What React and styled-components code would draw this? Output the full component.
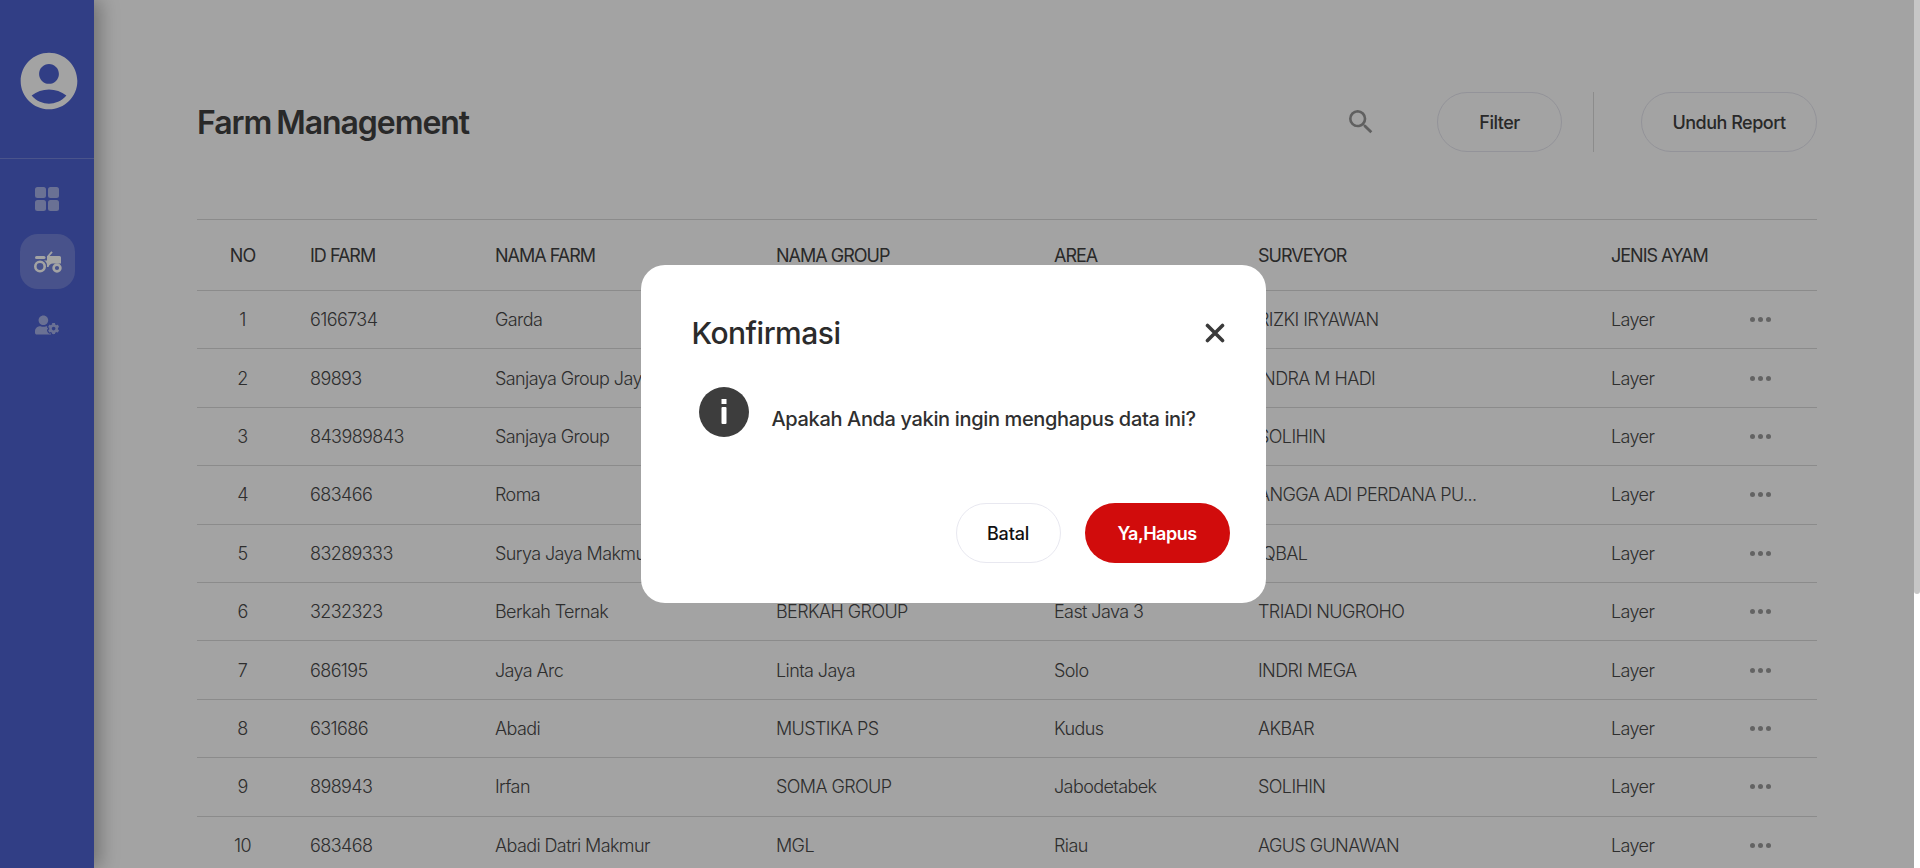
import { createGlobalStyle } from "styled-components";
import styled from "styled-components";
import { MdAccountCircle, MdSearch } from "react-icons/md";
import { FaUserCog } from "react-icons/fa";

const GlobalStyle = createGlobalStyle`
  html, body { margin: 0; padding: 0; height: 100%; overflow: hidden; background: #fff; }
  body { font-family: Inter, "Liberation Sans", sans-serif; color: #3f3f3f; }
  * { box-sizing: border-box; }
`;

const rows = [
  ["1", "6166734", "Garda", "", "", "RIZKI IRYAWAN"],
  ["2", "89893", "Sanjaya Group Jaya", "", "", "INDRA M HADI"],
  ["3", "843989843", "Sanjaya Group", "", "", "SOLIHIN"],
  ["4", "683466", "Roma", "", "", "ANGGA ADI PERDANA PU..."],
  ["5", "83289333", "Surya Jaya Makmur", "", "", "IQBAL"],
  ["6", "3232323", "Berkah Ternak", "BERKAH GROUP", "East Java 3", "TRIADI NUGROHO"],
  ["7", "686195", "Jaya Arc", "Linta Jaya", "Solo", "INDRI MEGA"],
  ["8", "631686", "Abadi", "MUSTIKA PS", "Kudus", "AKBAR"],
  ["9", "898943", "Irfan", "SOMA GROUP", "Jabodetabek", "SOLIHIN"],
  ["10", "683468", "Abadi Datri Makmur", "MGL", "Riau", "AGUS GUNAWAN"],
];

const columns = "91px 185px 281px 278px 204px 353px 130px 1fr";

export default function App() {
  return (
    <Page>
      <GlobalStyle />
      <Sidebar>
        <AvatarBox>
          <MdAccountCircle size={68} />
        </AvatarBox>
        <SideNav>
          <NavItem>
            <svg width="24" height="24" viewBox="0 0 24 24" fill="currentColor">
              <rect x="0" y="0" width="11" height="11" rx="2.5" />
              <rect x="13" y="0" width="11" height="11" rx="2.5" />
              <rect x="0" y="13" width="11" height="11" rx="2.5" />
              <rect x="13" y="13" width="11" height="11" rx="2.5" />
            </svg>
          </NavItem>
          <NavItem $active>
            <svg width="29" height="22" viewBox="0 0 29 22" fill="none">
              <circle cx="7" cy="15.5" r="4.7" stroke="currentColor" strokeWidth="2.6" />
              <circle cx="24" cy="17" r="3.4" stroke="currentColor" strokeWidth="2.6" />
              <rect x="2" y="5" width="10.5" height="3" rx="1.5" fill="currentColor" />
              <path d="M15 5.5 L19 0.8" stroke="currentColor" strokeWidth="1.8" />
              <path
                d="M14 5 H26.5 Q28 5 28 6.5 V12.5 H20 Q16.5 12.5 15.5 16 H14 Q14.5 11 11 9.5 H14 Z"
                fill="currentColor"
              />
            </svg>
          </NavItem>
          <NavItem>
            <FaUserCog size={24} />
          </NavItem>
        </SideNav>
      </Sidebar>
      <Main>
        <Header>
          <Title>Farm Management</Title>
          <Actions>
            <SearchIcon>
              <MdSearch size={32} />
            </SearchIcon>
            <PillButton $w={125}>Filter</PillButton>
            <Divider />
            <PillButton $w={176}>Unduh Report</PillButton>
          </Actions>
        </Header>
        <Table>
          <HeadRow>
            <NoCell>NO</NoCell>
            <Cell>ID FARM</Cell>
            <Cell>NAMA FARM</Cell>
            <Cell>NAMA GROUP</Cell>
            <Cell>AREA</Cell>
            <Cell>SURVEYOR</Cell>
            <Cell>JENIS AYAM</Cell>
            <Cell />
          </HeadRow>
          {rows.map((r) => (
            <BodyRow key={r[0]}>
              <NoCell>{r[0]}</NoCell>
              <Cell>{r[1]}</Cell>
              <Cell>{r[2]}</Cell>
              <Cell>{r[3]}</Cell>
              <Cell>{r[4]}</Cell>
              <Cell>{r[5]}</Cell>
              <Cell>Layer</Cell>
              <DotsCell>
                <Dot />
                <Dot />
                <Dot />
              </DotsCell>
            </BodyRow>
          ))}
        </Table>
      </Main>
      <ScrollTrack>
        <ScrollThumb />
      </ScrollTrack>
      <Overlay>
        <Modal>
          <ModalHead>
            <ModalTitle>Konfirmasi</ModalTitle>
            <CloseButton>
              <svg width="20" height="20" viewBox="0 0 20 20">
                <path
                  d="M2.5 2.5 L17.5 17.5 M17.5 2.5 L2.5 17.5"
                  stroke="currentColor"
                  strokeWidth="3.6"
                  strokeLinecap="round"
                />
              </svg>
            </CloseButton>
          </ModalHead>
          <ModalBody>
            <svg width="50" height="50" viewBox="0 0 50 50">
              <circle cx="25" cy="25" r="25" fill="#3d3d3d" />
              <rect x="22.5" y="12" width="5" height="5" fill="#fff" />
              <rect x="22.5" y="20" width="5" height="17" rx="1" fill="#fff" />
            </svg>
            <Message>Apakah Anda yakin ingin menghapus data ini?</Message>
          </ModalBody>
          <ModalFoot>
            <CancelButton>Batal</CancelButton>
            <DangerButton>Ya,Hapus</DangerButton>
          </ModalFoot>
        </Modal>
      </Overlay>
    </Page>
  );
}

const Page = styled.div`
  position: relative;
  display: flex;
  width: 1920px;
  height: 868px;
  overflow: hidden;
`;

const Sidebar = styled.aside`
  flex: 0 0 94px;
  background: #4e62d0;
  box-shadow: 6px 0 18px rgba(0, 0, 0, 0.3);
  z-index: 1;
`;

const AvatarBox = styled.div`
  height: 159px;
  padding: 47px 0 0 3px;
  display: flex;
  justify-content: center;
  align-items: flex-start;
  color: #fff;
  border-bottom: 1px solid rgba(255, 255, 255, 0.22);
`;

const SideNav = styled.nav`
  display: flex;
  flex-direction: column;
  align-items: center;
  padding-top: 12px;
`;

const NavItem = styled.div`
  width: 55px;
  height: 55px;
  margin-bottom: 8px;
  border-radius: 18px;
  display: flex;
  align-items: center;
  justify-content: center;
  background: ${(p) => (p.$active ? "rgba(255,255,255,0.2)" : "transparent")};
  color: ${(p) => (p.$active ? "#fff" : "rgba(255,255,255,0.5)")};
`;

const Main = styled.main`
  flex: 1;
  padding: 92px 97px 0 103px;
`;

const Header = styled.header`
  display: flex;
  justify-content: space-between;
  align-items: center;
  height: 60px;
  margin-bottom: 67px;
`;

const Title = styled.h1`
  margin: 0;
  font-size: 32px;
  font-weight: 600;
  letter-spacing: -1.05px;
  word-spacing: -2px;
  color: #404040;
`;

const Actions = styled.div`
  display: flex;
  align-items: center;
`;

const SearchIcon = styled.div`
  display: flex;
  color: #969696;
  margin-right: 60px;
`;

const PillButton = styled.div`
  width: ${(p) => p.$w}px;
  height: 60px;
  border: 1px solid #e6e6ef;
  border-radius: 30px;
  display: flex;
  align-items: center;
  justify-content: center;
  font-size: 18px;
  font-weight: 500;
  letter-spacing: -0.5px;
  color: #404040;
`;

const Divider = styled.div`
  width: 1px;
  height: 60px;
  margin: 0 47px 0 31px;
  background: #dcdcdc;
`;

const Table = styled.div`
  border-top: 1px solid #d9d9d9;
`;

const HeadRow = styled.div`
  display: grid;
  grid-template-columns: ${columns};
  height: 71px;
  align-items: center;
  border-bottom: 1px solid #d9d9d9;
  font-size: 18px;
  font-weight: 400;
  letter-spacing: -1px;
  color: #404040;
`;

const BodyRow = styled.div`
  display: grid;
  grid-template-columns: ${columns};
  height: 58.4px;
  align-items: center;
  border-bottom: 1px solid #d9d9d9;
  font-size: 18px;
  font-weight: 300;
  letter-spacing: -0.6px;
  color: #484848;
`;

const Cell = styled.div`
  padding: 0 22px;
  white-space: nowrap;
`;

const NoCell = styled.div`
  text-align: center;
`;

const DotsCell = styled.div`
  display: flex;
  justify-content: center;
  gap: 3px;
  padding-right: 15px;
`;

const Dot = styled.span`
  width: 5px;
  height: 5px;
  border-radius: 50%;
  background: #9c9c9c;
`;

const ScrollTrack = styled.div`
  flex: 0 0 6px;
  background: #fff;
`;

const ScrollThumb = styled.div`
  height: 594px;
  border-radius: 0 0 3px 3px;
  background: #c6c6c6;
`;

const Overlay = styled.div`
  position: absolute;
  top: 0;
  left: 0;
  right: 6px;
  bottom: 0;
  z-index: 5;
  background: rgba(0, 0, 0, 0.36);
  display: flex;
  align-items: center;
  justify-content: center;
  padding-right: 8px;
`;

const Modal = styled.div`
  width: 625px;
  height: 338px;
  border-radius: 24px;
  background: #fff;
  padding: 50px 36px 40px 51px;
  display: flex;
  flex-direction: column;
`;

const ModalHead = styled.div`
  display: flex;
  justify-content: space-between;
  align-items: center;
  height: 36px;
  padding-right: 5px;
`;

const ModalTitle = styled.h2`
  margin: 0;
  font-size: 30px;
  font-weight: 500;
  letter-spacing: -0.5px;
  color: #2b2b2b;
`;

const CloseButton = styled.div`
  display: flex;
  color: #3a3a3a;
`;

const ModalBody = styled.div`
  display: flex;
  align-items: center;
  gap: 23px;
  padding-left: 7px;
  margin-top: 36px;
`;

const Message = styled.p`
  margin: 14px 0 0;
  font-size: 20px;
  font-weight: 500;
  letter-spacing: -0.35px;
  color: #2f2f2f;
`;

const ModalFoot = styled.div`
  display: flex;
  justify-content: flex-end;
  gap: 24px;
  margin-top: auto;
`;

const CancelButton = styled.div`
  width: 105px;
  height: 60px;
  border-radius: 30px;
  border: 1px solid #e8e8f0;
  display: flex;
  align-items: center;
  justify-content: center;
  font-size: 18px;
  font-weight: 500;
  letter-spacing: -0.2px;
  color: #111;
`;

const DangerButton = styled(CancelButton)`
  width: 145px;
  border: 0;
  background: #d10c0c;
  color: #fff;
  font-weight: 600;
  letter-spacing: -0.5px;
`;
